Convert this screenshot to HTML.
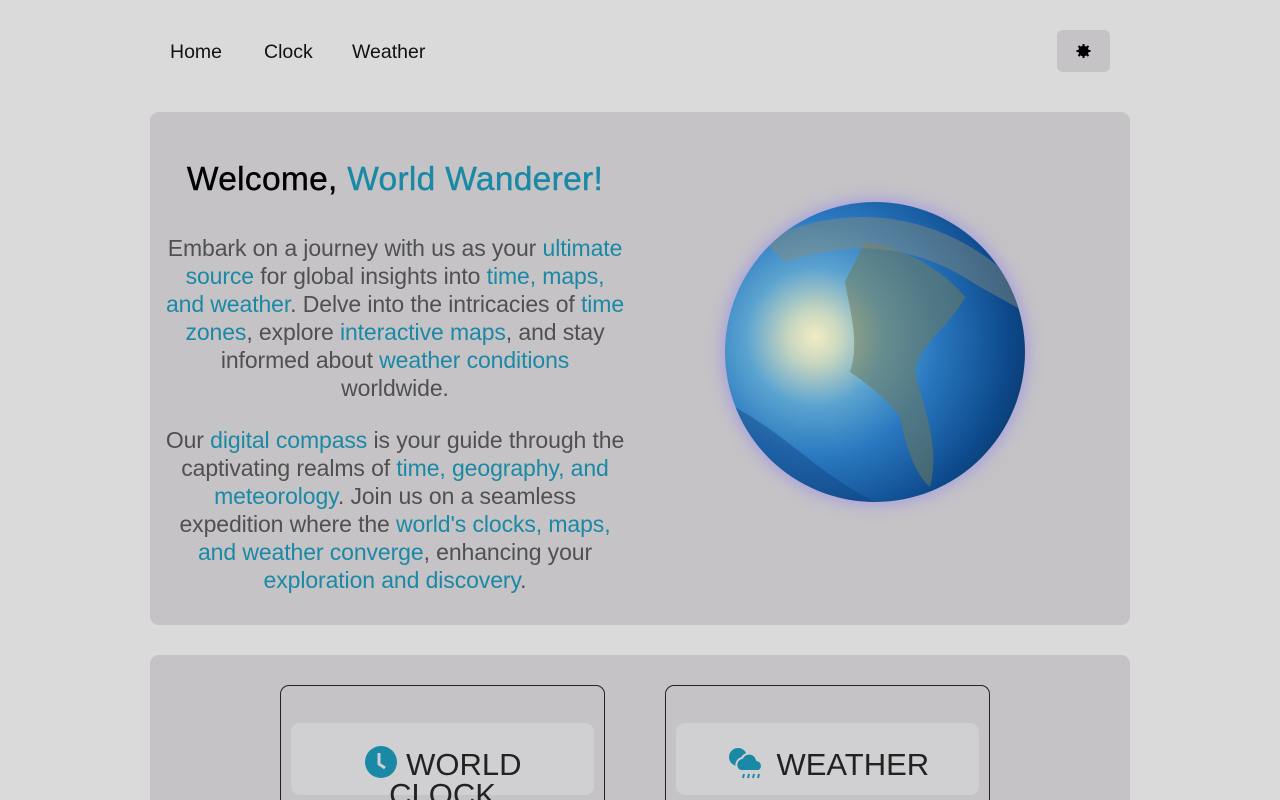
<!DOCTYPE html>
<html><head><style>
html,body{margin:0;height:800px;overflow:hidden}
body{background:#dadada;font-family:"Liberation Sans",sans-serif;width:1280px;position:relative}
.nav a{position:absolute;top:41px;font-size:19.5px;color:#111;text-decoration:none}
.btn{position:absolute;left:1057px;top:30px;width:53px;height:42px;background:#c5c3c6;border-radius:6px}
.hero{position:absolute;left:150px;top:112px;width:980px;height:513px;background:#c5c3c6;border-radius:9px}
h1{position:absolute;left:0;top:161px;width:790px;text-align:center;margin:0;font-weight:normal;font-size:33.5px;color:#000;letter-spacing:.3px;-webkit-text-stroke:.4px #000}
h1 .t{-webkit-text-stroke:.4px #1a89a5}
.t{color:#1a89a5}
.p{position:absolute;left:145px;width:500px;text-align:center;font-size:23px;line-height:28px;color:#505050;letter-spacing:-.1px;white-space:nowrap}
.globe{position:absolute;left:725px;top:202px;width:300px;height:300px;border-radius:50%;
background:radial-gradient(circle at 30% 45%,#f2ecc4 0,#c7d6c0 10%,#5aa3d0 26%,#2a78c0 45%,#0d4a8c 72%,#05203f 100%);
box-shadow:0 0 14px 4px rgba(160,150,230,.7);overflow:hidden}
.sec{position:absolute;left:150px;top:655px;width:980px;height:145px;background:#c5c3c6;border-radius:9px 9px 0 0}
.card{position:absolute;top:685px;width:323px;height:115px;border:1px solid #222;border-bottom:none;border-radius:9px 9px 0 0;overflow:hidden}
.in{position:absolute;left:10px;top:37px;width:303px;height:72px;background:#d0d0d2;border-radius:9px;text-align:center;font-size:31px;color:#222;line-height:30px;padding-top:22px;box-sizing:border-box}
</style></head><body>
<div class="nav"><a style="left:170px">Home</a><a style="left:264px">Clock</a><a style="left:352px">Weather</a></div>
<div class="btn"><svg width="53" height="42"><circle cx="26.5" cy="21" r="4" fill="none" stroke="#000" stroke-width="2.5"/><g stroke="#000" stroke-width="2"><line x1="26.5" y1="14" x2="26.5" y2="28"/><line x1="19.5" y1="21" x2="33.5" y2="21"/><line x1="21.5" y1="16" x2="31.5" y2="26"/><line x1="31.5" y1="16" x2="21.5" y2="26"/></g></svg></div>
<div class="hero"></div>
<h1>Welcome, <span class="t">World Wanderer!</span></h1>
<div class="p" style="top:234px">Embark on a journey with us as your <span class="t">ultimate</span><br><span class="t">source</span> for global insights into <span class="t">time, maps,</span><br><span class="t">and weather</span>. Delve into the intricacies of <span class="t">time</span><br><span class="t">zones</span>, explore <span class="t">interactive maps</span>, and stay<br>informed about <span class="t">weather conditions</span><br>worldwide.</div>
<div class="p" style="top:426px">Our <span class="t">digital compass</span> is your guide through the<br>captivating realms of <span class="t">time, geography, and</span><br><span class="t">meteorology</span>. Join us on a seamless<br>expedition where the <span class="t">world's clocks, maps,</span><br><span class="t">and weather converge</span>, enhancing your<br><span class="t">exploration and discovery</span>.</div>
<div class="globe"><svg width="300" height="300"><path d="M140 40 C180 45 220 70 240 95 C225 125 195 140 190 170 C200 210 215 245 205 285 C188 270 180 240 175 215 C160 195 140 180 125 170 C135 140 125 110 120 80Z" fill="#6f7a5a" opacity=".55"/><path d="M40 40 C100 5 200 0 280 70 L300 110 L255 85 C210 55 150 30 60 60Z" fill="#8a8b78" opacity=".45"/><path d="M0 200 C60 230 90 270 150 300 L0 300Z" fill="#0c3f7a" opacity=".4"/></svg></div>
<div class="sec"></div>
<div class="card" style="left:280px"><div class="in"><svg width="34" height="34" style="vertical-align:-4px"><circle cx="17" cy="17" r="16" fill="#1a89a5"/><path d="M15 8v11l6 4" stroke="#d0d0d2" stroke-width="3" fill="none"/></svg> WORLD<br>CLOCK</div></div>
<div class="card" style="left:665px"><div class="in"><svg width="42" height="34" style="vertical-align:-4px"><circle cx="12" cy="12" r="9" fill="#1a89a5"/><path d="M14 26a7 7 0 0 1 2-13a8 8 0 0 1 15 2a6 6 0 0 1 2 11z" fill="#1a89a5" stroke="#d0d0d2" stroke-width="2"/><g stroke="#1a89a5" stroke-width="2"><line x1="18" y1="29" x2="17" y2="33"/><line x1="23" y1="29" x2="22" y2="33"/><line x1="28" y1="29" x2="27" y2="33"/><line x1="33" y1="29" x2="32" y2="33"/></g></svg> WEATHER</div></div>
</body></html>
